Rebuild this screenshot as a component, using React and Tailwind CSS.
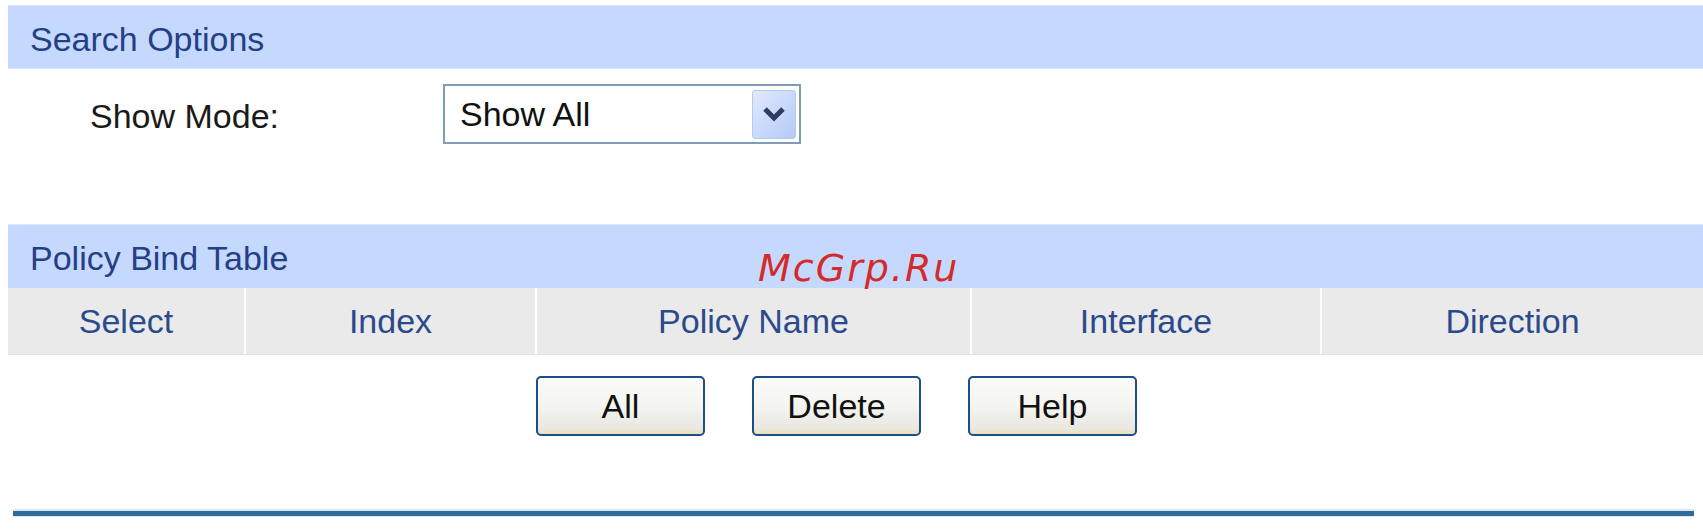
import React from "react";

function Chevron() {
  return (
    <svg width="24" height="16" viewBox="0 0 24 16">
      <path d="M3 3 L12 12 L21 3" fill="none" stroke="#2c3e66" strokeWidth="5" strokeLinejoin="miter" />
    </svg>
  );
}

function Btn({ children }) {
  return (
    <div className="w-[169px] h-[60px] rounded-[5px] border-2 border-[#1d4f87] bg-gradient-to-b from-[#fbfbfa] via-[#f4f4f1] to-[#e6e4dc] flex items-center justify-center text-[34px] text-[#111] shadow-[inset_0_-3px_0_#ece3c2]">
      {children}
    </div>
  );
}

export default function App() {
  const cols = [
    { w: "w-[236px]", t: "Select" },
    { w: "w-[291px]", t: "Index" },
    { w: "w-[435px]", t: "Policy Name" },
    { w: "w-[350px]", t: "Interface" },
    { w: "flex-1", t: "Direction" },
  ];
  return (
    <div
      className="relative w-[1703px] h-[532px] bg-white overflow-hidden pt-[5px] pl-[8px]"
      style={{ fontFamily: '"Liberation Sans", Arial, sans-serif' }}
    >
      <div className="h-[64px] bg-[#c5d9fe] border-y border-[#dce7fc] flex items-center pl-[22px] pt-[4px] text-[34px] text-[#253f85] leading-none">
        Search Options
      </div>
      <div className="flex items-center mt-[15px]">
        <div className="w-[435px] pl-[82px] text-[34px] text-[#1a1a1a] leading-none pt-[4px]">Show Mode:</div>
        <div className="w-[358px] h-[60px] border-2 border-[#7f9db9] bg-white flex items-center justify-between pl-[15px] pr-[3px]">
          <span className="text-[34px] text-[#111] leading-none">Show All</span>
          <div className="w-[44px] h-[49px] rounded-[3px] border border-[#b5c8f2] bg-gradient-to-br from-[#e1eafe] to-[#b4caf7] flex items-center justify-center">
            <Chevron />
          </div>
        </div>
      </div>
      <div className="mt-[80px] h-[64px] bg-[#c5d9fe] border-t border-[#dce7fc] flex items-center pl-[22px] pt-[2px] text-[34px] text-[#253f85] leading-none">
        Policy Bind Table
      </div>
      <div className="flex h-[67px] bg-[#eaeaea] border-b border-[#e2e2e2]">
        {cols.map((c, i) => (
          <div
            key={c.t}
            className={`${c.w} flex items-center justify-center text-[34px] text-[#2b4a8c] leading-none ${i > 0 ? "border-l-2 border-white" : ""}`}
          >
            {c.t}
          </div>
        ))}
      </div>
      <div className="flex gap-[47px] mt-[21px] pl-[528px]">
        <Btn>All</Btn>
        <Btn>Delete</Btn>
        <Btn>Help</Btn>
      </div>
      <div className="mt-[73px] ml-[5px] w-[1681px] h-[8px] bg-[#dbe7f2] flex items-center">
        <div className="w-full h-[5px] bg-[#2f6a99]" />
      </div>
      <div
        className="absolute left-[758px] top-[249px] text-[38px] italic text-[#d42a2a] leading-none tracking-[2px]"
        style={{ fontFamily: '"DejaVu Sans", sans-serif' }}
      >
        McGrp.Ru
      </div>
    </div>
  );
}
